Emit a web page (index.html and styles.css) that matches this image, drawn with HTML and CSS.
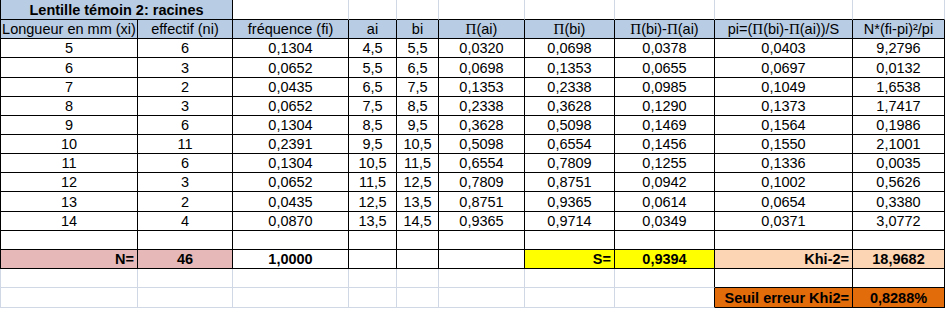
FILE: index.html
```html
<!DOCTYPE html>
<html lang="fr">
<head>
<meta charset="utf-8">
<title>Lentille témoin 2: racines</title>
<link rel="stylesheet" href="styles.css">
</head>
<body>
<div class="sheet">
  <div class="c first hd b span2">Lentille témoin 2: racines</div>
  <div class="c gt"></div><div class="c gt"></div><div class="c gt"></div><div class="c gt"></div><div class="c gt"></div><div class="c gt"></div><div class="c gt"></div><div class="c gt"></div>

  <div class="c first hd">Longueur en mm (xi)</div>
  <div class="c hd">effectif (ni)</div>
  <div class="c hd">fréquence (fi)</div>
  <div class="c hd">ai</div>
  <div class="c hd">bi</div>
  <div class="c hd"><span class="pi">Π</span>(ai)</div>
  <div class="c hd"><span class="pi">Π</span>(bi)</div>
  <div class="c hd"><span class="pi">Π</span>(bi)-<span class="pi">Π</span>(ai)</div>
  <div class="c hd">pi=(<span class="pi">Π</span>(bi)-<span class="pi">Π</span>(ai))/S</div>
  <div class="c hd">N*(fi-pi)²/pi</div>

  <div class="c first">5</div><div class="c">6</div><div class="c">0,1304</div><div class="c">4,5</div><div class="c">5,5</div><div class="c">0,0320</div><div class="c">0,0698</div><div class="c">0,0378</div><div class="c">0,0403</div><div class="c">9,2796</div>
  <div class="c first">6</div><div class="c">3</div><div class="c">0,0652</div><div class="c">5,5</div><div class="c">6,5</div><div class="c">0,0698</div><div class="c">0,1353</div><div class="c">0,0655</div><div class="c">0,0697</div><div class="c">0,0132</div>
  <div class="c first">7</div><div class="c">2</div><div class="c">0,0435</div><div class="c">6,5</div><div class="c">7,5</div><div class="c">0,1353</div><div class="c">0,2338</div><div class="c">0,0985</div><div class="c">0,1049</div><div class="c">1,6538</div>
  <div class="c first">8</div><div class="c">3</div><div class="c">0,0652</div><div class="c">7,5</div><div class="c">8,5</div><div class="c">0,2338</div><div class="c">0,3628</div><div class="c">0,1290</div><div class="c">0,1373</div><div class="c">1,7417</div>
  <div class="c first">9</div><div class="c">6</div><div class="c">0,1304</div><div class="c">8,5</div><div class="c">9,5</div><div class="c">0,3628</div><div class="c">0,5098</div><div class="c">0,1469</div><div class="c">0,1564</div><div class="c">0,1986</div>
  <div class="c first">10</div><div class="c">11</div><div class="c">0,2391</div><div class="c">9,5</div><div class="c">10,5</div><div class="c">0,5098</div><div class="c">0,6554</div><div class="c">0,1456</div><div class="c">0,1550</div><div class="c">2,1001</div>
  <div class="c first">11</div><div class="c">6</div><div class="c">0,1304</div><div class="c">10,5</div><div class="c">11,5</div><div class="c">0,6554</div><div class="c">0,7809</div><div class="c">0,1255</div><div class="c">0,1336</div><div class="c">0,0035</div>
  <div class="c first">12</div><div class="c">3</div><div class="c">0,0652</div><div class="c">11,5</div><div class="c">12,5</div><div class="c">0,7809</div><div class="c">0,8751</div><div class="c">0,0942</div><div class="c">0,1002</div><div class="c">0,5626</div>
  <div class="c first">13</div><div class="c">2</div><div class="c">0,0435</div><div class="c">12,5</div><div class="c">13,5</div><div class="c">0,8751</div><div class="c">0,9365</div><div class="c">0,0614</div><div class="c">0,0654</div><div class="c">0,3380</div>
  <div class="c first">14</div><div class="c">4</div><div class="c">0,0870</div><div class="c">13,5</div><div class="c">14,5</div><div class="c">0,9365</div><div class="c">0,9714</div><div class="c">0,0349</div><div class="c">0,0371</div><div class="c">3,0772</div>

  <div class="c first"></div><div class="c"></div><div class="c"></div><div class="c"></div><div class="c"></div><div class="c"></div><div class="c"></div><div class="c"></div><div class="c"></div><div class="c"></div>

  <div class="c first pink b r">N=</div>
  <div class="c pink b">46</div>
  <div class="c b">1,0000</div>
  <div class="c"></div><div class="c"></div><div class="c"></div>
  <div class="c yellow b r">S=</div>
  <div class="c yellow b">0,9394</div>
  <div class="c peach b r">Khi-2=</div>
  <div class="c peach b">18,9682</div>

  <div class="c first g"></div><div class="c g"></div><div class="c g"></div><div class="c g"></div><div class="c g"></div><div class="c g"></div><div class="c g"></div><div class="c g kr"></div>
  <div class="c"></div><div class="c"></div>

  <div class="c first g"></div><div class="c g"></div><div class="c g"></div><div class="c g"></div><div class="c g"></div><div class="c g"></div><div class="c g"></div><div class="c g kr"></div>
  <div class="c orange b r">Seuil erreur Khi2=</div>
  <div class="c orange b">0,8288%</div>
</div>
</body>
</html>
```
FILE: styles.css
```css
html, body {
  margin: 0;
  padding: 0;
  background: #ffffff;
}

.sheet {
  display: grid;
  grid-template-columns: 138px 95px 116px 48px 42px 86px 90px 100px 138px 92px;
  grid-template-rows: 20px 19px 19px 20px 19px 19px 19px 19px 19px 19px 20px 19px 19px 19px 19px 20px;
  font-family: "Liberation Sans", Arial, sans-serif;
  font-size: 14.5px;
  color: #000;
}

.c {
  box-sizing: border-box;
  border-right: 1px solid #000;
  border-bottom: 1px solid #000;
  display: flex;
  align-items: flex-end;
  justify-content: center;
  padding-bottom: 1px;
  line-height: 16px;
  white-space: nowrap;
  overflow: hidden;
  background: #fff;
}

.first {
  border-left: 1px solid #000;
}

.span2 {
  grid-column: span 2;
}

.hd {
  background: #b8cce4;
}

.b {
  font-weight: bold;
}

.r {
  justify-content: flex-end;
  padding-right: 3px;
}

.gt {
  border-right-color: #d0d7e5;
}

.g {
  border-right-color: #d0d7e5;
  border-bottom-color: #d0d7e5;
}

.g.first {
  border-left-color: #d0d7e5;
}

.g.kr {
  border-right-color: #000;
}

.pink {
  background: #e6b8b7;
}

.yellow {
  background: #ffff00;
}

.peach {
  background: #fcd5b4;
}

.orange {
  background: #e26b0a;
}

.pi {
  font-family: "Liberation Serif", "Times New Roman", serif;
  font-size: 15px;
}
```
